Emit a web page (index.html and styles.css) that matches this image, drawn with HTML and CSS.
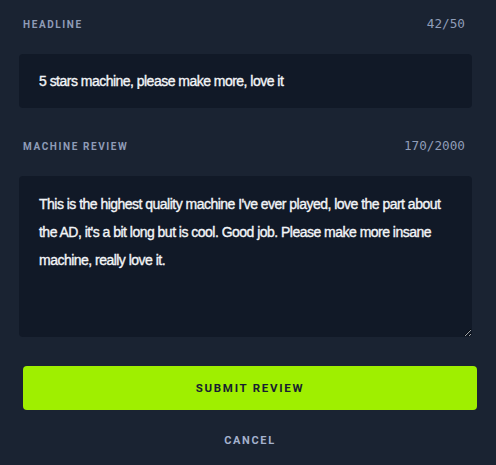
FILE: index.html
```html
<!DOCTYPE html>
<html lang="en">
<head>
<meta charset="utf-8">
<title>Review</title>
<link rel="stylesheet" href="styles.css">
</head>
<body>
<form class="review-form">
  <div class="field">
    <div class="field-head">
      <label class="field-label" for="headline">Headline</label>
      <span class="field-count">42/50</span>
    </div>
    <input class="field-input" id="headline" type="text" value="5 stars machine, please make more, love it">
  </div>
  <div class="field">
    <div class="field-head">
      <label class="field-label" for="review">Machine Review</label>
      <span class="field-count">170/2000</span>
    </div>
    <textarea class="field-input field-area" id="review">This is the highest quality machine I've ever played, love the part about the AD, it's a bit long but is cool. Good job. Please make more insane machine, really love it.</textarea>
  </div>
  <button class="btn-submit" type="button">Submit Review</button>
  <button class="btn-cancel" type="button">Cancel</button>
</form>
</body>
</html>
```
FILE: styles.css
```css
html, body {
  margin: 0;
  padding: 0;
  background: #1a2332;
}

body {
  font-family: "Liberation Sans", Arial, sans-serif;
}

.review-form {
  display: flex;
  flex-direction: column;
  padding: 16px 19px 0 23px;
}

.field {
  display: flex;
  flex-direction: column;
  margin-bottom: 30px;
}

.field-head {
  display: flex;
  justify-content: space-between;
  align-items: baseline;
  padding-right: 12px;
  height: 16px;
  margin-bottom: 22px;
}

.field-label {
  font-family: Roboto, "Liberation Sans", sans-serif;
  font-weight: 700;
  font-size: 10px;
  line-height: 16px;
  letter-spacing: 0.16em;
  text-transform: uppercase;
  color: #8f9cb7;
}

.field-count {
  font-family: "DejaVu Sans Mono", "Liberation Mono", monospace;
  font-size: 12.7px;
  line-height: 16px;
  color: #909db8;
}

.field-input {
  display: block;
  box-sizing: border-box;
  width: calc(100% - 1px);
  margin: 0 0 0 -4px;
  height: 54px;
  padding: 0 20px;
  border: none;
  border-radius: 4px;
  background: #111927;
  color: #f3f5f8;
  font-family: "Liberation Sans", Arial, sans-serif;
  font-size: 14px;
  letter-spacing: -0.52px;
  -webkit-text-stroke: 0.35px #f3f5f8;
  outline: none;
}

.field-area {
  height: 161px;
  padding: 14px 20px;
  line-height: 28px;
  resize: vertical;
}

.field:last-of-type {
  margin-bottom: 29px;
}

.btn-submit {
  height: 44px;
  border: none;
  border-radius: 4px;
  background: #9fef00;
  color: #172030;
  font-family: Roboto, "Liberation Sans", sans-serif;
  font-weight: 700;
  font-size: 11.5px;
  letter-spacing: 0.15em;
  text-transform: uppercase;
  padding: 0;
}

.btn-cancel {
  margin-top: 20px;
  align-self: center;
  height: 20px;
  border: none;
  background: none;
  color: #a4b1cd;
  font-family: Roboto, "Liberation Sans", sans-serif;
  font-weight: 700;
  font-size: 11px;
  letter-spacing: 0.15em;
  text-transform: uppercase;
  padding: 0;
}
```
